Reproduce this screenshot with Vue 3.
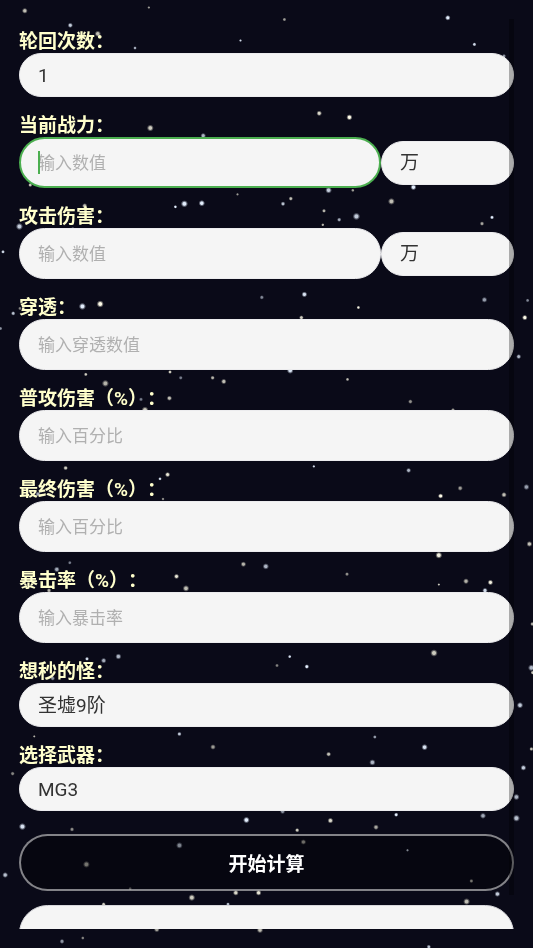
<script setup>
import { onMounted, ref } from 'vue'

// Each star: x, y, radius, opacity, tint (c = cool, w = warm)
const stars = [
  [24.8, 10.8, 2.2, 0.75, 'w'], [148.8, 7.5, 1.2, 0.6, 'w'], [70.3, 25.3, 2, 0.85, 'c'], [97.8, 33.8, 2.4, 0.75, 'w'],
  [135, 48, 1.4, 0.7, 'c'], [240.5, 40.5, 1.2, 0.9, 'c'], [150.3, 128, 2.6, 0.8, 'w'], [203.2, 135.7, 2.1, 0.75, 'c'],
  [30.3, 185, 1.6, 0.8, 'w'], [84.7, 205.8, 2, 0.75, 'w'], [175.4, 206.8, 1.4, 1, 'c'], [184.4, 203.8, 2.7, 1, 'c'],
  [201.8, 203.2, 2.4, 1, 'c'], [237.5, 194.4, 1.2, 0.6, 'w'], [19.4, 226.5, 2.7, 0.85, 'c'], [72.8, 229, 1.6, 0.7, 'c'],
  [284.4, 19.5, 1.5, 0.6, 'w'], [447.8, 17.8, 2.1, 1, 'c'], [474.4, 44.4, 1.6, 0.9, 'c'], [504, 56, 1.6, 0.6, 'c'],
  [319.2, 113.3, 2.1, 0.85, 'w'], [349.4, 117.3, 2.3, 1, 'w'], [328.6, 190.2, 2.5, 0.85, 'c'], [352.8, 190.3, 1.4, 0.6, 'w'],
  [283, 203.8, 1.8, 0.8, 'c'], [290.8, 198.6, 1.7, 0.75, 'w'], [391.4, 201.4, 2.6, 0.75, 'w'], [324, 210.8, 1.6, 0.7, 'w'],
  [339.2, 219.7, 1.7, 0.7, 'c'], [356.4, 216.4, 2.8, 0.85, 'c'], [322.8, 224.8, 1.3, 0.7, 'w'], [413.4, 187.2, 2.3, 1, 'c'],
  [482, 223.6, 1.7, 0.65, 'w'], [492, 217.4, 1.6, 1, 'c'],
  [3, 251.8, 1.5, 0.9, 'c'], [261.8, 297.4, 1.7, 0.55, 'c'], [82.4, 306.4, 2.7, 1, 'c'], [100.2, 304, 2.7, 1, 'w'],
  [13.2, 313.4, 1.7, 0.8, 'c'], [20, 308.4, 1.5, 0.5, 'w'], [0.5, 328.5, 1.5, 0.6, 'c'], [85.8, 374.4, 1.5, 0.8, 'w'],
  [105.4, 383.4, 2.7, 0.7, 'w'], [170, 372, 1.5, 0.8, 'w'], [180.7, 377.8, 1.6, 0.5, 'c'], [212.6, 377.8, 1.7, 0.7, 'w'],
  [223.8, 381.5, 2.1, 0.75, 'w'], [141, 399.4, 1.6, 0.5, 'c'], [169.4, 398.2, 2, 0.75, 'w'], [145, 410, 2.6, 0.8, 'w'],
  [65.6, 468, 1.8, 0.8, 'w'],
  [304.4, 294.4, 2.2, 0.95, 'c'], [358.4, 307.5, 1.4, 0.95, 'w'], [301.4, 317.6, 1.8, 0.8, 'w'], [484.4, 299.8, 2.2, 0.65, 'c'],
  [527.6, 300.4, 1.5, 0.55, 'c'], [524.8, 317.6, 2.1, 1, 'w'], [518.7, 356.6, 1.9, 0.75, 'c'], [290.2, 370.5, 2.5, 0.95, 'c'],
  [347.5, 379.4, 1.4, 0.75, 'w'], [410.4, 401.6, 1.8, 0.55, 'w'], [453, 410, 1.6, 0.6, 'w'], [313.8, 466.4, 1.2, 0.9, 'c'],
  [408.6, 470.4, 1.9, 0.75, 'c'],
  [160, 478.8, 1.4, 0.9, 'c'], [167.6, 474.6, 2, 0.9, 'w'], [38, 494, 2, 0.7, 'c'], [163, 499, 1.3, 0.5, 'w'],
  [69.8, 562.7, 1.5, 0.5, 'c'], [56.8, 569.4, 2.2, 0.7, 'c'], [176.5, 576.4, 2, 0.9, 'w'], [186, 588.4, 2.5, 0.75, 'w'],
  [243.4, 564.2, 2.1, 0.7, 'w'], [265.8, 566.4, 2.4, 0.75, 'c'], [49, 590.5, 1.8, 0.7, 'w'], [87, 658.8, 1.6, 0.9, 'c'],
  [103.7, 660.6, 2.1, 0.7, 'c'], [118.4, 656.5, 2.3, 0.75, 'c'], [52.7, 678.4, 1.8, 0.6, 'c'],
  [460.2, 488.2, 2, 0.6, 'w'], [440.6, 496, 2, 1, 'w'], [504, 494.8, 2.1, 0.75, 'w'], [526.4, 487, 2.3, 0.65, 'c'],
  [529.4, 544, 2.2, 0.75, 'w'], [438.8, 555.2, 2.6, 0.95, 'w'], [347, 574.2, 1.6, 0.55, 'w'], [438.8, 584.6, 1.1, 0.8, 'w'],
  [466, 581.2, 2.2, 0.7, 'w'], [490.4, 582.4, 2.1, 0.95, 'w'], [485, 590.5, 2.1, 0.9, 'c'], [532.4, 624, 1.7, 0.7, 'w'],
  [434, 653, 2.8, 0.8, 'w'], [289.7, 656.6, 1.4, 0.95, 'c'], [277, 665.5, 1.5, 0.5, 'w'], [306.8, 666.6, 1.8, 1, 'c'],
  [531.4, 667.8, 2.6, 0.75, 'c'], [532.6, 672.6, 1.6, 0.8, 'w'],
  [34.3, 736.4, 1.1, 0.7, 'w'], [179.4, 734, 1.7, 0.85, 'c'], [213, 747, 2.1, 0.6, 'w'], [12.6, 773.6, 1.7, 0.5, 'w'],
  [22.4, 826.6, 2.7, 0.95, 'c'], [72, 829.4, 1.7, 0.55, 'w'], [246.4, 820, 2.5, 1, 'c'], [179.4, 845.4, 2.5, 0.8, 'c'],
  [86.4, 864.4, 2.6, 0.65, 'w'], [5.2, 875, 2.2, 0.8, 'c'], [130.2, 888.6, 1.4, 0.4, 'w'], [191.8, 897.6, 2.6, 0.8, 'w'],
  [235.8, 892.8, 2.2, 0.85, 'w'], [258.6, 892.8, 2.2, 0.9, 'w'], [103.6, 904.4, 1.7, 0.8, 'w'], [228, 904.2, 1.5, 0.8, 'c'],
  [156.8, 929.4, 2.2, 0.65, 'w'], [260, 930, 2.4, 0.75, 'w'], [62, 941.4, 1.9, 0.6, 'c'], [82.8, 938, 1.4, 0.5, 'w'],
  [520, 705.2, 2.4, 0.85, 'c'], [374.8, 737, 1.5, 0.65, 'c'], [328.6, 754.2, 1.9, 0.75, 'w'], [424.6, 747.2, 2.4, 0.95, 'c'],
  [372.4, 762.4, 2.4, 0.75, 'c'], [531.4, 749, 1.6, 0.75, 'w'], [523.4, 767.8, 2.2, 0.85, 'c'], [516.4, 797, 2.4, 0.75, 'c'],
  [516.4, 818.2, 2.7, 0.8, 'c'], [282.6, 811.4, 2, 0.6, 'c'], [330.4, 820.6, 2.2, 0.85, 'w'], [396.2, 814.7, 1.7, 1, 'c'],
  [376, 827.2, 2.1, 0.65, 'w'], [483, 815.8, 2.3, 0.7, 'c'], [297.2, 830.2, 1.7, 0.8, 'w'], [303.4, 842, 2.1, 0.6, 'w'],
  [407.5, 850.3, 1.2, 0.8, 'c'], [471.4, 881, 1.6, 0.65, 'w'], [497.4, 894, 2.2, 0.85, 'c'], [466.6, 901.6, 2.6, 0.75, 'w'],
  [428.8, 946.8, 1.7, 0.8, 'c']
]

const units = ['万', '亿', '兆']
const rounds = ref('1')
const power = ref('')
const powerUnit = ref('万')
const attack = ref('')
const attackUnit = ref('万')
const pierce = ref('')
const basic = ref('')
const finalDamage = ref('')
const crit = ref('')
const monster = ref('圣墟9阶')
const weapon = ref('MG3')
const result = ref('')

const powerInput = ref(null)
const powerFocused = ref(false)

onMounted(() => powerInput.value.focus())

function calculate() {
  const total = Number(attack.value) * (1 + Number(basic.value) / 100) * (1 + Number(finalDamage.value) / 100)
  result.value = total ? `${total.toFixed(2)}${attackUnit.value}` : ''
}
</script>

<template>
  <svg class="sky" aria-hidden="true">
    <defs>
      <radialGradient id="star-c">
        <stop offset="0" stop-color="#e6f0ff" />
        <stop offset="0.4" stop-color="#e0ebfa" />
        <stop offset="0.65" stop-color="#e0ebfa" stop-opacity="0.45" />
        <stop offset="1" stop-color="#e0ebfa" stop-opacity="0" />
      </radialGradient>
      <radialGradient id="star-w">
        <stop offset="0" stop-color="#fffff0" />
        <stop offset="0.4" stop-color="#fbf8e4" />
        <stop offset="0.65" stop-color="#fbf8e4" stop-opacity="0.45" />
        <stop offset="1" stop-color="#fbf8e4" stop-opacity="0" />
      </radialGradient>
    </defs>
    <circle
      v-for="(s, i) in stars"
      :key="i"
      :cx="s[0]"
      :cy="s[1]"
      :r="s[2] * 1.35"
      :opacity="s[3]"
      :fill="`url(#star-${s[4]})`"
    />
  </svg>

  <main class="page">
    <form class="panel" @submit.prevent="calculate">
      <div class="group">
        <label for="rounds">轮回次数：</label>
        <select id="rounds" v-model="rounds" class="field">
          <option v-for="n in 9" :key="n" :value="String(n)">{{ n }}</option>
        </select>
      </div>

      <div class="group">
        <label for="power">当前战力：</label>
        <div class="row">
          <div class="entry">
            <input
              id="power"
              ref="powerInput"
              v-model="power"
              class="field tall"
              :class="{ active: powerFocused }"
              type="text"
              inputmode="decimal"
              placeholder="输入数值"
              @focus="powerFocused = true"
              @blur="powerFocused = false"
            />
            <span v-if="powerFocused && !power" class="caret"></span>
          </div>
          <select v-model="powerUnit" class="field unit" aria-label="单位">
            <option v-for="u in units" :key="u">{{ u }}</option>
          </select>
        </div>
      </div>

      <div class="group">
        <label for="attack">攻击伤害：</label>
        <div class="row">
          <div class="entry">
            <input id="attack" v-model="attack" class="field tall" type="text" inputmode="decimal" placeholder="输入数值" />
          </div>
          <select v-model="attackUnit" class="field unit" aria-label="单位">
            <option v-for="u in units" :key="u">{{ u }}</option>
          </select>
        </div>
      </div>

      <div class="group">
        <label for="pierce">穿透：</label>
        <input id="pierce" v-model="pierce" class="field tall" type="text" inputmode="decimal" placeholder="输入穿透数值" />
      </div>

      <div class="group">
        <label for="basic">普攻伤害（%）：</label>
        <input id="basic" v-model="basic" class="field tall" type="text" inputmode="decimal" placeholder="输入百分比" />
      </div>

      <div class="group">
        <label for="final">最终伤害（%）：</label>
        <input id="final" v-model="finalDamage" class="field tall" type="text" inputmode="decimal" placeholder="输入百分比" />
      </div>

      <div class="group">
        <label for="crit">暴击率（%）：</label>
        <input id="crit" v-model="crit" class="field tall" type="text" inputmode="decimal" placeholder="输入暴击率" />
      </div>

      <div class="group">
        <label for="monster">想秒的怪：</label>
        <select id="monster" v-model="monster" class="field">
          <option>圣墟9阶</option>
        </select>
      </div>

      <div class="group">
        <label for="weapon">选择武器：</label>
        <select id="weapon" v-model="weapon" class="field">
          <option>MG3</option>
        </select>
      </div>

      <button class="submit" type="submit">开始计算</button>
      <output class="result">{{ result }}</output>
    </form>
    <div class="thumb" aria-hidden="true"></div>
  </main>
</template>

<style>
body {
  background: #0a0a18;
}
</style>

<style scoped>
.sky {
  position: fixed;
  inset: 0;
  width: 100%;
  height: 100%;
}

.page {
  position: relative;
  box-sizing: border-box;
  height: 100vh;
  padding: 19px;
  font-family: Roboto, "Noto Sans CJK SC", sans-serif;
  font-size: 19px;
  text-spacing-trim: space-all;
}

.panel {
  box-sizing: border-box;
  height: 100%;
  padding-top: 11px;
  overflow-y: auto;
  scrollbar-width: none;
}

.group {
  display: flex;
  flex-direction: column;
  margin-bottom: 17px;
}

label {
  font-weight: 700;
  line-height: 23px;
  color: #ffffcc;
}

.row {
  display: flex;
  align-items: center;
}

.entry {
  position: relative;
  flex: 1;
}

.field {
  box-sizing: border-box;
  display: block;
  width: 100%;
  height: 44px;
  margin: 0;
  padding: 0 18px;
  border: 1px solid #ececee;
  border-radius: 26px;
  outline: none;
  appearance: none;
  background: #f5f5f5;
  color: #333;
  font: inherit;
}

.tall {
  height: 51px;
  font-size: 17px;
}

.field::placeholder {
  color: #b0b0b0;
  opacity: 1;
}

.unit {
  flex: none;
  width: 133px;
}

.active {
  padding: 0 17px;
  border: 2px solid #4caf50;
  caret-color: transparent;
}

.caret {
  position: absolute;
  top: 14px;
  left: 19px;
  width: 2px;
  height: 23px;
  background: #4caf50;
  pointer-events: none;
}

.submit {
  display: block;
  width: 100%;
  height: 57px;
  margin: 23px 0 14px;
  padding: 0;
  border: 2px solid rgba(255, 255, 255, 0.5);
  border-radius: 29px;
  background: rgba(0, 0, 0, 0.3);
  color: #fff;
  font: inherit;
  font-weight: 700;
}

.result {
  box-sizing: border-box;
  display: block;
  min-height: 57px;
  padding: 14px 18px;
  border: 1px solid #d8d8dc;
  border-radius: 29px;
  background: #f5f5f5;
  color: #333;
}

.thumb {
  position: absolute;
  top: 19px;
  right: 19px;
  bottom: 53px;
  width: 5px;
  background: rgba(0, 0, 0, 0.3);
  pointer-events: none;
}
</style>
